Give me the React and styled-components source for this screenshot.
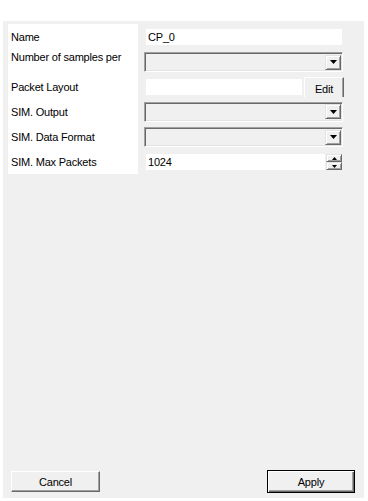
import React from "react";
import styled, { createGlobalStyle } from "styled-components";

const Global = createGlobalStyle`
  html, body { margin: 0; padding: 0; background: #ffffff; }
  body {
    font-family: "Liberation Sans", Arial, sans-serif;
    font-size: 11px;
    letter-spacing: -0.2px;
    color: #000;
  }
`;

const Page = styled.div`
  width: 368px;
  height: 501px;
  padding: 21px 0 0 3px;
  box-sizing: border-box;
`;

const Panel = styled.div`
  width: 361px;
  height: 477px;
  background: #f0f0f0;
  display: flex;
  flex-direction: column;
`;

const Form = styled.div`
  display: flex;
  flex-direction: column;
  padding: 3px 0 0 5px;
`;

const Row = styled.div`
  display: flex;
  height: ${(p) => p.$h}px;
`;

const LabelCell = styled.div`
  width: 130px;
  flex: none;
  background: #ffffff;
  display: flex;
  align-items: ${(p) => (p.$top ? "flex-start" : "center")};
  padding: ${(p) => (p.$top ? "2px" : "0")} 0 0 3px;
  box-sizing: border-box;
  white-space: nowrap;
  overflow: hidden;
`;

const FieldCell = styled.div`
  margin-left: 6px;
  display: flex;
  align-items: center;
  gap: ${(p) => p.$gap || 0}px;
`;

const TextBox = styled.div`
  width: ${(p) => p.$w}px;
  height: 16px;
  margin-left: 2px;
  background: #ffffff;
  display: flex;
  align-items: center;
  padding-left: 2px;
  box-sizing: border-box;
`;

const Combo = styled.div`
  width: 199px;
  height: 20px;
  box-sizing: border-box;
  background: #f0f0f0;
  border: 1px solid;
  border-color: #a0a0a0 #ffffff #ffffff #a0a0a0;
  box-shadow: inset 1px 1px 0 #696969, inset -1px -1px 0 #e3e3e3;
  display: flex;
  justify-content: flex-end;
  align-items: center;
  padding-right: 1px;
`;

const ArrowButton = styled.div`
  width: 16px;
  height: ${(p) => p.$h || 15}px;
  box-sizing: border-box;
  background: #f0f0f0;
  border: 1px solid;
  border-color: #e3e3e3 #696969 #696969 #e3e3e3;
  box-shadow: inset 1px 1px 0 #ffffff, inset -1px -1px 0 #a0a0a0;
  display: flex;
  align-items: center;
  justify-content: center;
`;

const Spin = styled.div`
  display: flex;
  flex-direction: column;
  margin-left: 1px;
`;

const EditButton = styled.div`
  width: 40px;
  height: 20px;
  box-sizing: border-box;
  background: #f0f0f0;
  border-top: 1px solid #ffffff;
  border-left: 1px solid #ffffff;
  border-right: 1px solid #696969;
  box-shadow: inset -1px 0 0 #a0a0a0;
  display: flex;
  align-items: center;
  justify-content: center;
  padding-top: 2px;
`;

const Footer = styled.div`
  margin-top: auto;
  display: flex;
  justify-content: space-between;
  align-items: center;
  padding: 0 9px 5px 8px;
  height: 23px;
`;

const Button = styled.div`
  width: ${(p) => p.$w}px;
  height: ${(p) => (p.$default ? 23 : 21)}px;
  box-sizing: border-box;
  background: #f0f0f0;
  border: 1px solid;
  border-color: ${(p) =>
    p.$default ? "#000000" : "#ffffff #696969 #696969 #ffffff"};
  box-shadow: ${(p) =>
    p.$default
      ? "inset 1px 1px 0 #ffffff, inset -1px -1px 0 #696969, inset -2px -2px 0 #a0a0a0"
      : "inset -1px -1px 0 #a0a0a0"};
  display: flex;
  align-items: center;
  justify-content: center;
`;

const Down = ({ w = 7, h = 4 }) => (
  <svg width={w} height={h} viewBox={`0 0 ${w} ${h}`}>
    <polygon points={`0,0 ${w},0 ${w / 2},${h}`} fill="#000" />
  </svg>
);

const Up = ({ w = 5, h = 3 }) => (
  <svg width={w} height={h} viewBox={`0 0 ${w} ${h}`}>
    <polygon points={`0,${h} ${w},${h} ${w / 2},0`} fill="#000" />
  </svg>
);

const ComboBox = () => (
  <Combo>
    <ArrowButton>
      <Down />
    </ArrowButton>
  </Combo>
);

export default function App() {
  return (
    <>
      <Global />
      <Page>
        <Panel>
          <Form>
            <Row $h={25}>
              <LabelCell>Name</LabelCell>
              <FieldCell>
                <TextBox $w={196}>CP_0</TextBox>
              </FieldCell>
            </Row>
            <Row $h={26}>
              <LabelCell $top>Number of samples per</LabelCell>
              <FieldCell>
                <ComboBox />
              </FieldCell>
            </Row>
            <Row $h={24}>
              <LabelCell>Packet Layout</LabelCell>
              <FieldCell $gap={0}>
                <TextBox $w={156}>{""}</TextBox>
                <EditButton style={{ marginLeft: 2 }}>Edit</EditButton>
              </FieldCell>
            </Row>
            <Row $h={25}>
              <LabelCell>SIM. Output</LabelCell>
              <FieldCell>
                <ComboBox />
              </FieldCell>
            </Row>
            <Row $h={26}>
              <LabelCell>SIM. Data Format</LabelCell>
              <FieldCell>
                <ComboBox />
              </FieldCell>
            </Row>
            <Row $h={24}>
              <LabelCell>SIM. Max Packets</LabelCell>
              <FieldCell>
                <TextBox $w={179}>1024</TextBox>
                <Spin>
                  <ArrowButton $h={8}>
                    <Up />
                  </ArrowButton>
                  <ArrowButton $h={8}>
                    <Down w={5} h={3} />
                  </ArrowButton>
                </Spin>
              </FieldCell>
            </Row>
          </Form>
          <Footer>
            <Button $w={89}>Cancel</Button>
            <Button $w={88} $default>
              Apply
            </Button>
          </Footer>
        </Panel>
      </Page>
    </>
  );
}
